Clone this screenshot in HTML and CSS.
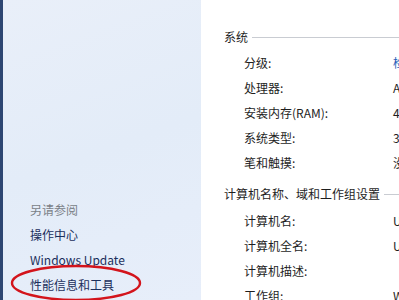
FILE: index.html
```html
<!DOCTYPE html>
<html lang="zh-CN">
<head>
<meta charset="utf-8">
<link rel="stylesheet" href="styles.css">
</head>
<body>
<div class="window">
  <aside class="sidebar">
    <div class="see-also">另请参阅</div>
    <a class="nav-link">操作中心</a>
    <a class="nav-link">Windows Update</a>
    <a class="nav-link">性能信息和工具</a>
    <svg class="circle-mark" width="140" height="40" viewBox="0 0 140 40">
      <ellipse cx="72" cy="19" rx="64" ry="17" fill="none" stroke="#d3141c" stroke-width="2.4"/>
    </svg>
  </aside>
  <main class="content">
    <section class="group">
      <div class="group-head"><span>系统</span><i class="rule"></i></div>
      <div class="row"><span class="label">分级:</span><span class="value link">检查系统分级</span></div>
      <div class="row"><span class="label">处理器:</span><span class="value">AMD Athlon</span></div>
      <div class="row"><span class="label">安装内存(RAM):</span><span class="value">4.00 GB</span></div>
      <div class="row"><span class="label">系统类型:</span><span class="value">32 位操作系统</span></div>
      <div class="row"><span class="label">笔和触摸:</span><span class="value">没有可用的笔</span></div>
    </section>
    <section class="group second">
      <div class="group-head"><span>计算机名称、域和工作组设置</span><i class="rule"></i></div>
      <div class="row"><span class="label">计算机名:</span><span class="value">USER-PC</span></div>
      <div class="row"><span class="label">计算机全名:</span><span class="value">USER-PC</span></div>
      <div class="row"><span class="label">计算机描述:</span><span class="value"></span></div>
      <div class="row"><span class="label">工作组:</span><span class="value">WORKGROUP</span></div>
    </section>
  </main>
</div>
</body>
</html>
```

FILE: styles.css
```css
* { box-sizing: border-box; }
html, body {
  margin: 0;
  padding: 0;
  width: 399px;
  height: 300px;
  overflow: hidden;
  background: #ffffff;
  font-family: "Noto Sans CJK SC", "Noto Sans", sans-serif;
  font-size: 12px;
  color: #1e1e1e;
}
.window {
  display: flex;
  width: 399px;
  height: 300px;
}
.sidebar {
  position: relative;
  flex: 0 0 201px;
  height: 300px;
  border-left: 3px solid #2d4672;
  background: linear-gradient(160deg, #e9eff9 0%, #e3ecf8 50%, #e7eefa 100%);
  display: flex;
  flex-direction: column;
  padding: 197px 0 0 27px;
}
.see-also, .nav-link {
  display: block;
  line-height: 25px;
  height: 25px;
  white-space: nowrap;
}
.see-also { color: #7a7f87; }
.nav-link { color: #1b2f5c; }
.circle-mark {
  position: absolute;
  left: 1px;
  top: 264px;
}
.content {
  flex: 1;
  min-width: 0;
  padding: 24px 0 0 23px;
  overflow: hidden;
}
.group-head {
  display: flex;
  align-items: center;
  height: 25px;
  line-height: 25px;
  margin-bottom: 1px;
  white-space: nowrap;
}
.rule {
  flex: 1;
  height: 1px;
  margin-left: 4px;
  margin-top: 2px;
  background: #c9ccd2;
}
.second { margin-top: 6px; }
.second .group-head { margin-bottom: 2px; }
.row {
  display: grid;
  grid-template-columns: 149px auto;
  padding-left: 20px;
  height: 25px;
  line-height: 25px;
  white-space: nowrap;
}
.value.link { color: #1f5db8; }
```
